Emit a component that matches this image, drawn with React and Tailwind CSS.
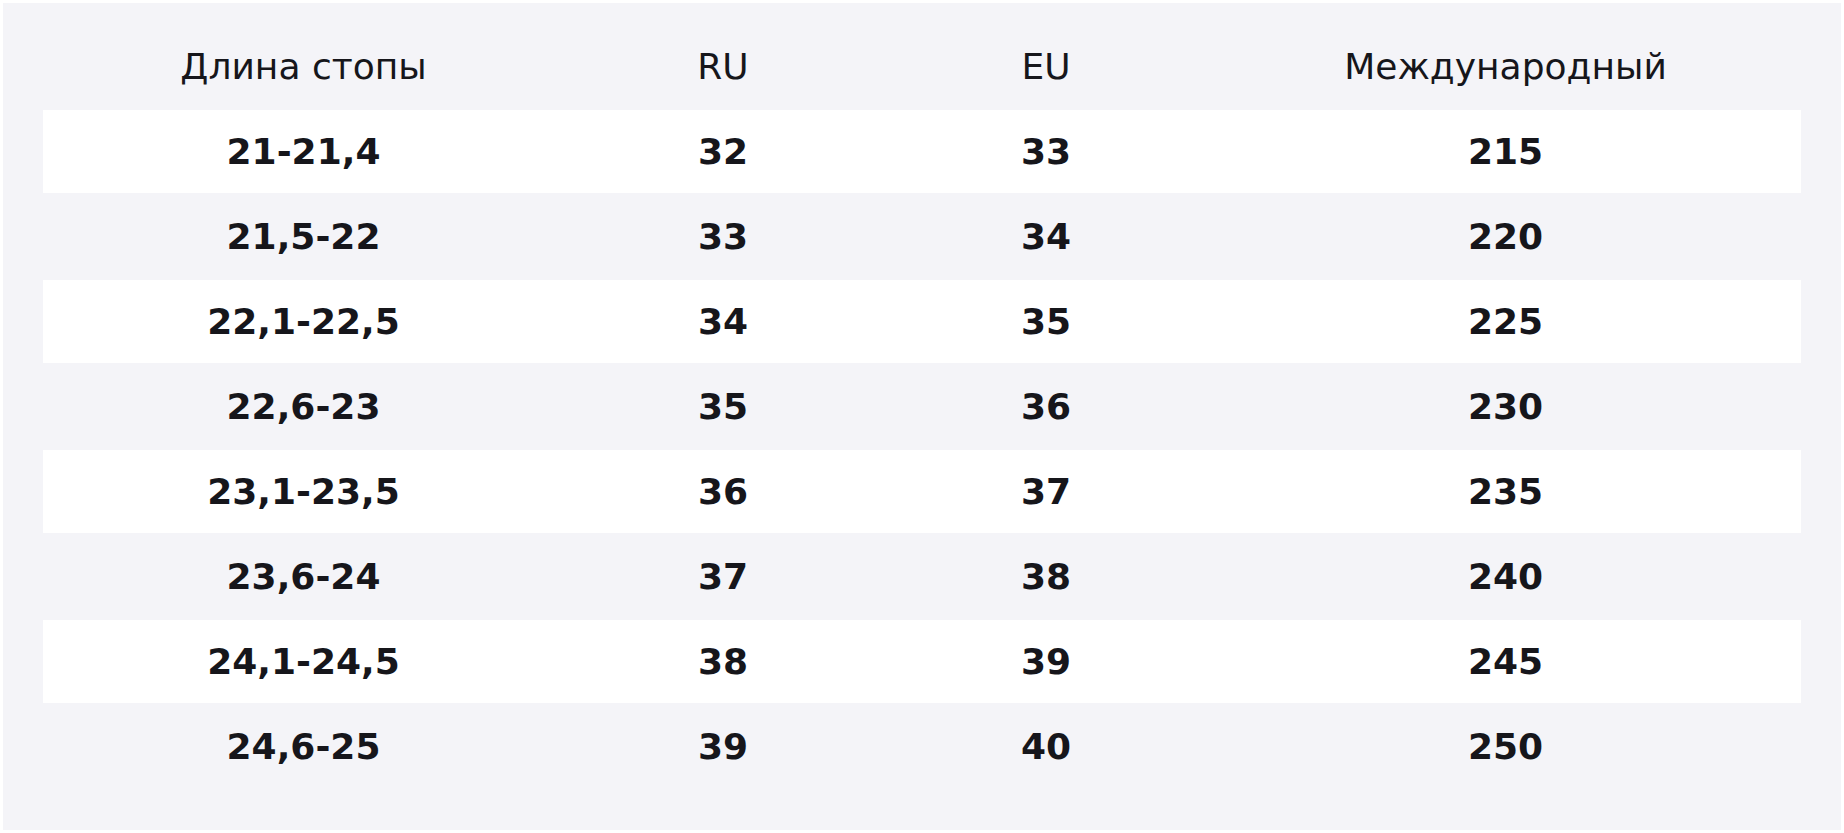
const sizes = [
    ['21-21,4', '32', '33', '215'],
    ['21,5-22', '33', '34', '220'],
    ['22,1-22,5', '34', '35', '225'],
    ['22,6-23', '35', '36', '230'],
    ['23,1-23,5', '36', '37', '235'],
    ['23,6-24', '37', '38', '240'],
    ['24,1-24,5', '38', '39', '245'],
    ['24,6-25', '39', '40', '250'],
];

export default function App() {
    return (
        <div className="bg-white p-[3px] h-[833px] overflow-hidden">
            <div className="bg-[#f4f4f8] h-full px-10 pt-5 text-[#16161b] font-['DejaVu_Sans',sans-serif]">
                <table className="w-full table-fixed border-separate border-spacing-x-0 border-spacing-y-[2px] text-[36px] leading-none">
                    <colgroup>
                        <col className="w-[521px]" />
                        <col className="w-[318px]" />
                        <col className="w-[328px]" />
                        <col className="w-[591px]" />
                    </colgroup>
                    <thead>
                        <tr className="h-[83px]">
                            <th className="font-normal text-center">Длина стопы</th>
                            <th className="font-normal text-center">RU</th>
                            <th className="font-normal text-center">EU</th>
                            <th className="font-normal text-center">Международный</th>
                        </tr>
                    </thead>
                    <tbody>
                        {sizes.map((row, i) => (
                            <tr key={row[0]} className={i % 2 === 0 ? 'h-[83px] bg-white' : 'h-[83px]'}>
                                {row.map((cell, j) => (
                                    <td key={j} className="text-center font-bold">{cell}</td>
                                ))}
                            </tr>
                        ))}
                    </tbody>
                </table>
            </div>
        </div>
    );
}
